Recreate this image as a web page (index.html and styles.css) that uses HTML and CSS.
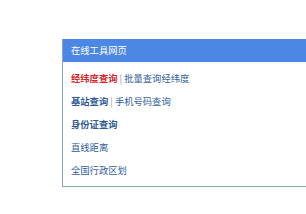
FILE: index.html
```html
<!DOCTYPE html>
<html>
<head>
<meta charset="utf-8">
<link rel="stylesheet" href="styles.css">
</head>
<body>
<div class="panel">
  <div class="head">在线工具网页</div>
  <ul class="list">
    <li><span class="hot">经纬度查询</span><span class="sep"> | </span><span class="lnk">批量查询经纬度</span></li>
    <li><span class="strong">基站查询</span><span class="sep"> | </span><span class="lnk">手机号码查询</span></li>
    <li><span class="strong">身份证查询</span></li>
    <li><span class="lnk">直线距离</span></li>
    <li><span class="lnk">全国行政区划</span></li>
  </ul>
</div>
</body>
</html>
```
FILE: styles.css
```css
html, body {
  margin: 0;
  padding: 0;
  background: #ffffff;
  overflow: hidden;
  width: 306px;
  height: 214px;
}
body {
  font-family: "Noto Sans CJK SC", "Noto Sans", sans-serif;
  font-size: 9.3px;
}
.panel {
  margin: 39px 0 0 62px;
  width: 244px;
  border-left: 1px solid #8aa3c4;
  border-bottom: 1px solid #8aa3c4;
  box-sizing: border-box;
}
.head {
  background: #4c87e6;
  color: #ffffff;
  height: 23px;
  line-height: 23px;
  padding-left: 8px;
}
.list {
  list-style: none;
  margin: 0;
  padding: 5px 0 4px 8px;
}
.list li {
  height: 23px;
  line-height: 23px;
}
.hot {
  color: #d4262b;
  font-weight: bold;
}
.strong {
  color: #2e5a98;
  font-weight: bold;
}
.lnk {
  color: #335f9c;
}
.sep {
  color: #8a9ab0;
}
```
